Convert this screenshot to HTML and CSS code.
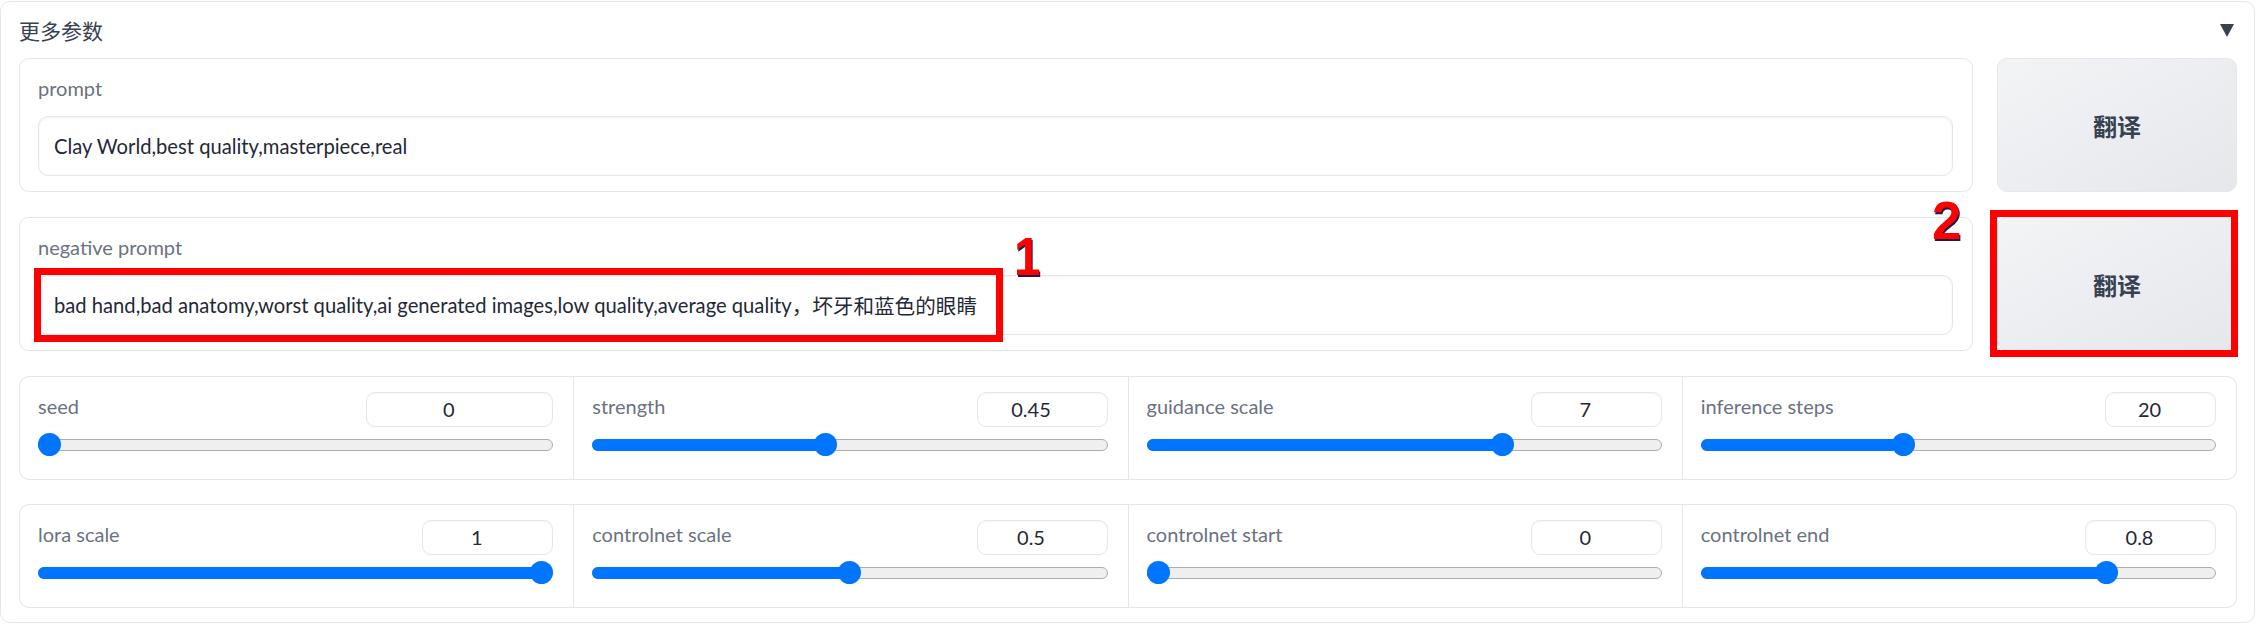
FILE: index.html
```html
<!DOCTYPE html>
<html lang="zh">
<head>
<meta charset="utf-8">
<title>更多参数</title>
<link rel="stylesheet" href="styles.css">
</head>
<body>
<div class="panel">
  <div class="panel-head">
    <span class="panel-title">更多参数</span>
    <svg class="caret" width="14" height="13" viewBox="0 0 14 13"><polygon points="0,0 14,0 7,13" fill="#374151"/></svg>
  </div>

  <div class="prompts">
    <div class="block">
      <div class="label">prompt</div>
      <div class="textbox">Clay World,best quality,masterpiece,real</div>
    </div>
    <button class="btn">翻译</button>
    <div class="block">
      <div class="label">negative prompt</div>
      <div class="textbox">bad hand,bad anatomy,worst quality,ai generated images,low quality,average quality<span class="cjk">，坏牙和蓝色的眼睛</span></div>
    </div>
    <button class="btn">翻译</button>

    <div class="mark mark-1"></div>
    <span class="num num-1">1</span>
    <span class="num num-2">2</span>
    <div class="mark mark-2"></div>
  </div>

  <div class="forms">
    <div class="form">
      <div class="slider">
        <div class="slider-head"><span class="label">seed</span><div class="numbox w-seed">0</div></div>
        <div class="range" style="--p:0"><div class="track"></div><div class="fill"></div><div class="thumb"></div></div>
      </div>
      <div class="slider">
        <div class="slider-head"><span class="label">strength</span><div class="numbox">0.45</div></div>
        <div class="range" style="--p:0.45"><div class="track"></div><div class="fill"></div><div class="thumb"></div></div>
      </div>
      <div class="slider">
        <div class="slider-head"><span class="label">guidance scale</span><div class="numbox">7</div></div>
        <div class="range" style="--p:0.7"><div class="track"></div><div class="fill"></div><div class="thumb"></div></div>
      </div>
      <div class="slider">
        <div class="slider-head"><span class="label">inference steps</span><div class="numbox w-steps">20</div></div>
        <div class="range" style="--p:0.388"><div class="track"></div><div class="fill"></div><div class="thumb"></div></div>
      </div>
    </div>

    <div class="form">
      <div class="slider">
        <div class="slider-head"><span class="label">lora scale</span><div class="numbox">1</div></div>
        <div class="range" style="--p:1"><div class="track"></div><div class="fill"></div><div class="thumb"></div></div>
      </div>
      <div class="slider">
        <div class="slider-head"><span class="label">controlnet scale</span><div class="numbox">0.5</div></div>
        <div class="range" style="--p:0.5"><div class="track"></div><div class="fill"></div><div class="thumb"></div></div>
      </div>
      <div class="slider">
        <div class="slider-head"><span class="label">controlnet start</span><div class="numbox">0</div></div>
        <div class="range" style="--p:0"><div class="track"></div><div class="fill"></div><div class="thumb"></div></div>
      </div>
      <div class="slider">
        <div class="slider-head"><span class="label">controlnet end</span><div class="numbox">0.8</div></div>
        <div class="range" style="--p:0.8"><div class="track"></div><div class="fill"></div><div class="thumb"></div></div>
      </div>
    </div>
  </div>
</div>
</body>
</html>
```

FILE: styles.css
```css
* { box-sizing: border-box; }

html, body {
  margin: 0;
  padding: 0;
  background: #ffffff;
}

body {
  font-family: Lato, "Noto Sans CJK SC", sans-serif;
  color: #1f2937;
}

.panel {
  width: 2255px;
  margin-top: 1px;
  border: 1px solid #e5e7eb;
  border-radius: 10px;
  padding: 14px 17px 14px 18px;
  background: #ffffff;
}

.panel-head {
  height: 28px;
  display: flex;
  align-items: center;
  justify-content: space-between;
  padding-right: 3px;
  margin-bottom: 14px;
}

.panel-title {
  font-family: "Noto Sans CJK SC", sans-serif;
  font-size: 21px;
  line-height: 28px;
  color: #374151;
}

.caret {
  display: block;
  margin-top: 1px;
}

.prompts {
  position: relative;
  display: grid;
  grid-template-columns: 1fr 240px;
  column-gap: 24px;
  row-gap: 25px;
  margin-bottom: 25px;
}

.block {
  height: 134px;
  border: 1px solid #e5e7eb;
  border-radius: 10px;
  padding: 15px 19px 15px 18px;
  background: #ffffff;
}

.label {
  display: block;
  font-size: 20px;
  line-height: 28px;
  color: #6b7280;
}

.textbox {
  margin-top: 14px;
  height: 60px;
  border: 1px solid #e5e7eb;
  border-radius: 10px;
  box-shadow: inset 0 1px 3px rgba(0, 0, 0, 0.05);
  padding: 0 15px;
  display: flex;
  align-items: center;
  font-size: 20.2px;
  color: #1f2937;
  white-space: pre;
  overflow: hidden;
}

.cjk {
  font-family: "Noto Sans CJK SC", sans-serif;
  font-size: 20.6px;
}

.btn {
  height: 134px;
  border: 1px solid #e5e7eb;
  border-radius: 10px;
  background: linear-gradient(to bottom right, #f3f4f6, #e5e7eb);
  font-family: "Noto Sans CJK SC", sans-serif;
  font-size: 24px;
  font-weight: 700;
  color: #374151;
  padding: 0;
}

/* annotations */
.mark {
  position: absolute;
  border: 7px solid #ff0000;
}

.mark-1 {
  left: 15px;
  top: 210px;
  width: 969px;
  height: 74px;
}

.mark-2 {
  left: 1971px;
  top: 152px;
  width: 248px;
  height: 147px;
}

.num {
  position: absolute;
  font-family: "Liberation Sans", Arial, sans-serif;
  font-weight: 700;
  font-size: 53px;
  line-height: 1;
  color: #ff0000;
  text-shadow: 1px 2px 0 #1b1b4d;
}

.num-1 {
  left: 995px;
  top: 172px;
  transform: scaleX(0.9);
  transform-origin: left top;
}

.num-2 {
  left: 1913px;
  top: 136px;
}

/* slider forms */
.forms {
  display: flex;
  flex-direction: column;
  gap: 24px;
}

.form {
  display: grid;
  grid-template-columns: repeat(4, 1fr);
  gap: 1px;
  background: #e5e7eb;
  border: 1px solid #e5e7eb;
  border-radius: 10px;
  overflow: hidden;
}

.slider {
  background: #ffffff;
  padding: 15px 20px 23px 18px;
}

.slider-head {
  display: flex;
  justify-content: space-between;
  align-items: flex-start;
  height: 35px;
}

.numbox {
  width: 131px;
  height: 35px;
  border: 1px solid #e5e7eb;
  border-radius: 9px;
  box-shadow: inset 0 1px 2px rgba(0, 0, 0, 0.04);
  font-size: 20px;
  line-height: 33px;
  text-align: center;
  padding: 0 22px 0 0;
  color: #1f2937;
}

.numbox.w-seed { width: 187px; }
.numbox.w-steps { width: 111px; }

.range {
  position: relative;
  margin-top: 6px;
  height: 23px;
  padding-top: 6px;
}

.track {
  height: 12px;
  border: 1px solid #adadad;
  border-radius: 6px;
  background: #efefef;
}

.fill {
  position: absolute;
  left: 0;
  top: 6px;
  height: 12px;
  border-radius: 6px;
  background: #0075ff;
  width: calc(11.5px + var(--p) * (100% - 23px));
}

.thumb {
  position: absolute;
  top: 0;
  left: calc(var(--p) * (100% - 23px));
  width: 23px;
  height: 23px;
  border-radius: 50%;
  background: #0075ff;
}
```
